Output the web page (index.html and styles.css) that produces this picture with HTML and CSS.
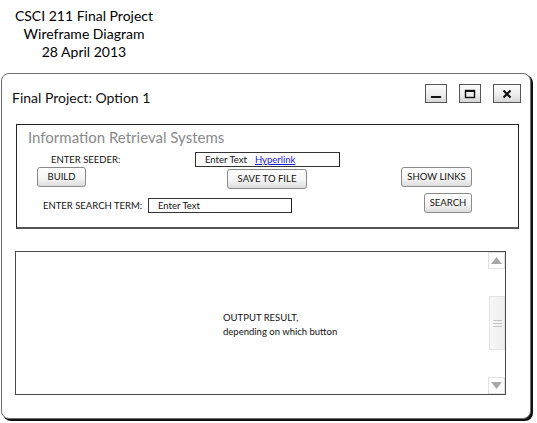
FILE: index.html
```html
<!DOCTYPE html>
<html>
<head>
<meta charset="utf-8">
<link rel="stylesheet" href="styles.css">
</head>
<body>
<div class="header">
  <div>CSCI 211 Final Project</div>
  <div>Wireframe Diagram</div>
  <div>28 April 2013</div>
</div>
<div class="window">
  <div class="titlebar">
    <span class="title">Final Project: Option 1</span>
    <div class="controls">
      <div class="wbtn wmin"><svg width="12" height="12" viewBox="0 0 12 12"><rect x="1" y="8" width="10" height="2" fill="#111"/></svg></div>
      <div class="wbtn wmax"><svg width="12" height="12" viewBox="0 0 12 12"><rect x="1.5" y="2.5" width="9" height="7" fill="none" stroke="#111" stroke-width="1.4"/><rect x="1" y="2" width="10" height="2" fill="#111"/></svg></div>
      <div class="wbtn wclose"><svg width="12" height="12" viewBox="0 0 12 12"><path d="M2.5 2.5 L9.5 9.5 M9.5 2.5 L2.5 9.5" stroke="#111" stroke-width="2.2"/></svg></div>
    </div>
  </div>
  <div class="panel">
    <div class="ptitle">Information Retrieval Systems</div>
    <div class="row rowa">
      <span class="label seeder">ENTER SEEDER:</span>
      <div class="textbox seedbox"><span>Enter Text</span><a class="link">Hyperlink</a></div>
    </div>
    <div class="row rowb">
      <div class="btn build">BUILD</div>
      <div class="btn save">SAVE TO FILE</div>
      <div class="btn showlinks">SHOW LINKS</div>
    </div>
    <div class="row rowc">
      <span class="label searchlbl">ENTER SEARCH TERM:</span>
      <div class="textbox searchbox"><span>Enter Text</span></div>
      <div class="btn search">SEARCH</div>
    </div>
  </div>
  <div class="output">
    <div class="outtext">
      <div>OUTPUT RESULT,</div>
      <div>depending on which button</div>
    </div>
    <div class="scrollbar">
      <div class="sbox"><svg width="11" height="7" viewBox="0 0 11 7"><path d="M0 7 L5.5 0 L11 7 Z" fill="#a8a8a8"/></svg></div>
      <div class="sgap1"></div>
      <div class="thumb"><svg width="9" height="7" viewBox="0 0 9 7"><path d="M0 0.5 H9 M0 3.5 H9 M0 6.5 H9" stroke="#c4c4c4" stroke-width="1"/></svg></div>
      <div class="sgap2"></div>
      <div class="sbox"><svg width="11" height="7" viewBox="0 0 11 7"><path d="M0 0 L5.5 7 L11 0 Z" fill="#a8a8a8"/></svg></div>
    </div>
  </div>
</div>
</body>
</html>
```

FILE: styles.css
```css
* { box-sizing: border-box; }
html, body { margin: 0; padding: 0; background: #fff; }
body {
  font-family: Lato, "Liberation Sans", sans-serif;
  color: #111;
  width: 537px;
  height: 423px;
  overflow: hidden;
}
.header {
  width: 168px;
  padding-top: 7px;
  text-align: center;
  font-size: 14px;
  line-height: 18px;
  color: #000;
}
.window {
  margin: 12px 0 0 1px;
  width: 530px;
  height: 346px;
  border: 1px solid #6e6e6e;
  border-radius: 8px;
  box-shadow: 2px 2px 0 #111;
  background: #fff;
}
.titlebar {
  display: flex;
  align-items: flex-start;
  justify-content: space-between;
  height: 30px;
  padding: 10px 9px 0 10px;
}
.title {
  font-size: 14px;
  line-height: 18px;
  padding-top: 5px;
  color: #111;
}
.controls { display: flex; gap: 12px; }
.wbtn {
  height: 19px;
  width: 22px;
  border: 1px solid #555;
  background: linear-gradient(#fdfdfd, #ececec 60%, #d6d6d6);
  display: flex;
  align-items: center;
  justify-content: center;
}
.wclose { width: 28px; }
.panel {
  margin: 20px 0 0 14px;
  width: 503px;
  height: 105px;
  border: 1px solid #222;
  border-bottom: 2px solid #555;
}
.ptitle {
  padding: 3px 0 0 11px;
  font-size: 15px;
  line-height: 18px;
  color: #8a8a8a;
}
.row { display: flex; align-items: flex-start; }
.label { font-size: 9.5px; line-height: 15px; color: #111; }
.rowa { margin-top: 6px; height: 15px; }
.seeder { width: 144px; margin-left: 34px; }
.textbox {
  height: 15px;
  border: 1px solid #333;
  border-right-color: #222;
  background: #fff;
  font-size: 9.5px;
  line-height: 13px;
  padding-left: 9px;
  white-space: nowrap;
}
.seedbox { width: 145px; }
.link { color: #1a1ae6; text-decoration: underline; margin-left: 8px; }
.rowb { height: 22px; }
.btn {
  height: 20px;
  border: 1px solid #8a8a8a;
  border-radius: 3px;
  background: linear-gradient(#ffffff, #f6f6f6 55%, #dcdcdc);
  font-size: 9.5px;
  line-height: 18px;
  text-align: center;
  color: #111;
  white-space: nowrap;
}
.build { width: 49px; margin-left: 20px; }
.save { width: 80px; margin-left: 141px; margin-top: 2px; }
.showlinks { width: 71px; margin-left: 94px; }
.rowc { margin-top: 4px; height: 20px; }
.searchlbl { width: 105px; margin-left: 26px; margin-top: 5px; }
.searchbox { width: 144px; margin-top: 5px; }
.search { width: 48px; margin-left: 132px; }
.output {
  margin: 22px 0 0 13px;
  width: 491px;
  height: 144px;
  border: 1px solid #4a4a4a;
  display: flex;
}
.outtext {
  flex: 1;
  padding: 59px 0 0 207px;
  font-size: 9.5px;
  line-height: 14px;
  color: #111;
}
.scrollbar {
  width: 17px;
  display: flex;
  flex-direction: column;
}
.sbox {
  height: 17px;
  border: 1px solid #e2e2e2;
  display: flex;
  align-items: center;
  justify-content: center;
  background: #fff;
}
.sgap1 { height: 27px; }
.thumb {
  height: 54px;
  margin-left: 1px;
  border: 1px solid #e4e4e4;
  background: linear-gradient(90deg, #f7f7f7, #efefef);
  display: flex;
  align-items: center;
  justify-content: center;
}
.sgap2 { height: 27px; }
```
